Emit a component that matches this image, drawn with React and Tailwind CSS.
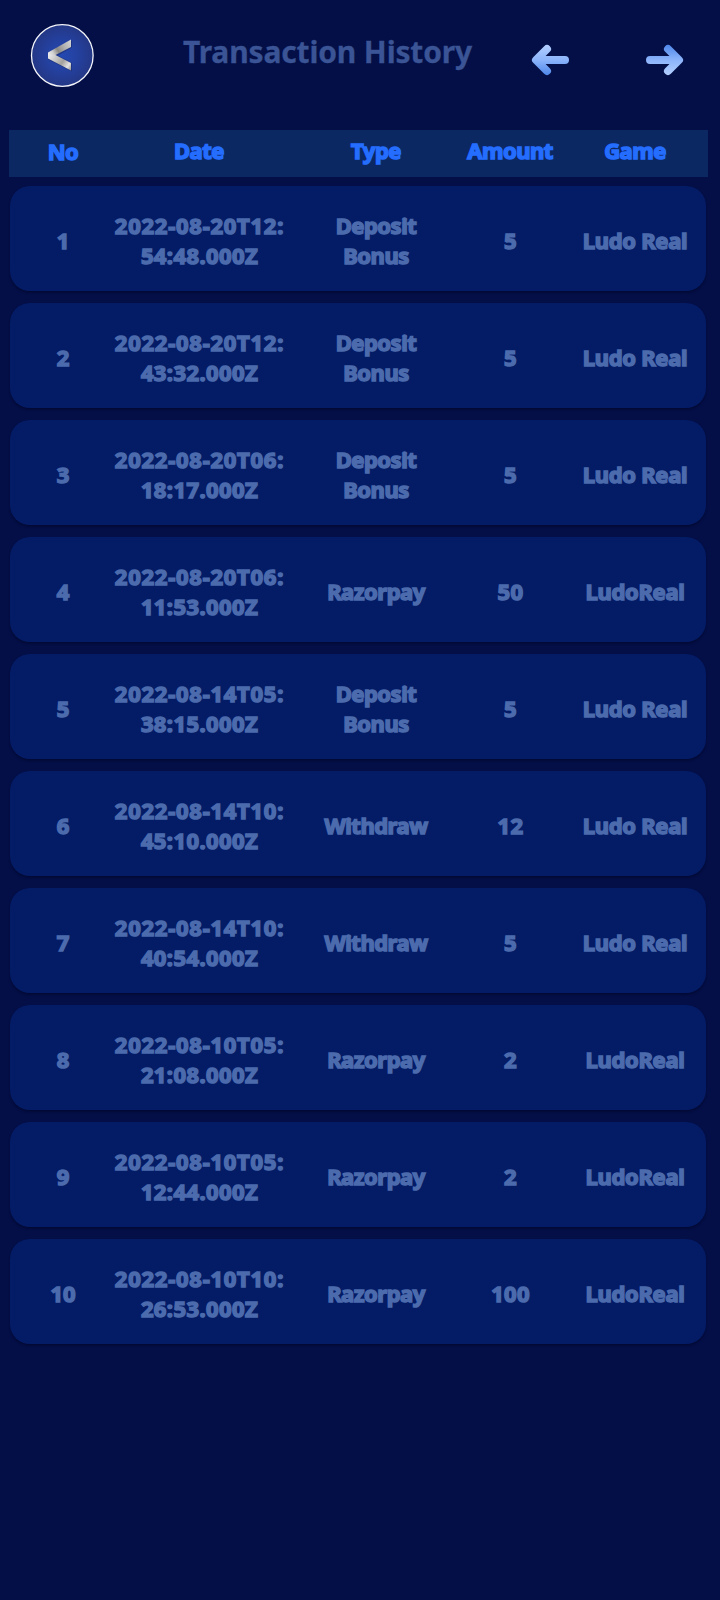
import React from 'react';

const transactions = [
  { date: ['2022-08-20T12:', '54:48.000Z'], type: ['Deposit', 'Bonus'], amount: 5, game: 'Ludo Real' },
  { date: ['2022-08-20T12:', '43:32.000Z'], type: ['Deposit', 'Bonus'], amount: 5, game: 'Ludo Real' },
  { date: ['2022-08-20T06:', '18:17.000Z'], type: ['Deposit', 'Bonus'], amount: 5, game: 'Ludo Real' },
  { date: ['2022-08-20T06:', '11:53.000Z'], type: ['Razorpay'], amount: 50, game: 'LudoReal' },
  { date: ['2022-08-14T05:', '38:15.000Z'], type: ['Deposit', 'Bonus'], amount: 5, game: 'Ludo Real' },
  { date: ['2022-08-14T10:', '45:10.000Z'], type: ['Withdraw'], amount: 12, game: 'Ludo Real' },
  { date: ['2022-08-14T10:', '40:54.000Z'], type: ['Withdraw'], amount: 5, game: 'Ludo Real' },
  { date: ['2022-08-10T05:', '21:08.000Z'], type: ['Razorpay'], amount: 2, game: 'LudoReal' },
  { date: ['2022-08-10T05:', '12:44.000Z'], type: ['Razorpay'], amount: 2, game: 'LudoReal' },
  { date: ['2022-08-10T10:', '26:53.000Z'], type: ['Razorpay'], amount: 100, game: 'LudoReal' },
];

const BackButton = () => (
  <button className="block h-16 w-16" aria-label="Back">
    <svg viewBox="0 0 64 64" className="h-16 w-16">
      <defs>
        <radialGradient id="disc">
          <stop offset="0" stopColor="#2448b0" />
          <stop offset="0.5" stopColor="#2441a0" />
          <stop offset="1" stopColor="#243785" />
        </radialGradient>
        <linearGradient id="upperArm" gradientUnits="userSpaceOnUse" x1="41" y1="18" x2="18" y2="32">
          <stop offset="0" stopColor="#d4d4d4" />
          <stop offset="0.3" stopColor="#b4b4b4" />
          <stop offset="0.6" stopColor="#8b8985" />
          <stop offset="0.8" stopColor="#d0d0d0" />
          <stop offset="1" stopColor="#f0f0f0" />
        </linearGradient>
        <linearGradient id="lowerArm" gradientUnits="userSpaceOnUse" x1="18" y1="31" x2="41" y2="46">
          <stop offset="0" stopColor="#f0f0f0" />
          <stop offset="0.35" stopColor="#c4c4c4" />
          <stop offset="0.6" stopColor="#a3a19e" />
          <stop offset="0.85" stopColor="#e2e2e2" />
          <stop offset="1" stopColor="#9b9b9b" />
        </linearGradient>
      </defs>
      <circle cx="32.3" cy="32.5" r="30.8" fill="url(#disc)" stroke="#f4f5fa" strokeWidth="1.3" />
      <path d="M42 17.5v7L28 32.500l14 7.500v8.500L18 36.500v-6z" fill="#16235f" opacity="0.45" />
      <path d="M41 16.500V24L25.500 32L18 32.500v-3z" fill="url(#upperArm)" />
      <path d="M18 32h7.500L41 40v7.500L18 35.500z" fill="url(#lowerArm)" />
    </svg>
  </button>
);

const Arrow = ({ id, d, from, to }) => (
  <svg viewBox="0 0 38 32" className="h-8 w-[38px]" fill="none" strokeWidth="8" strokeLinecap="round" strokeLinejoin="round">
    <defs>
      <linearGradient id={id} gradientUnits="userSpaceOnUse" x1="0" y1="0" x2="0" y2="32">
        <stop offset="0" stopColor={from} />
        <stop offset="0.5" stopColor="#8cb4fb" />
        <stop offset="1" stopColor={to} />
      </linearGradient>
    </defs>
    <path d={d} stroke={`url(#${id})`} />
  </svg>
);

const TableHeader = () => (
  <div className="ml-[9px] grid h-[47px] w-[699px] grid-cols-[70px_202px_152px_116px_134px] bg-[#0c2862] pl-[19px] pt-[5px] text-center text-[22px] leading-[30px] tracking-[-0.5px] text-[#246dff]">
    <span className="pt-px">No</span>
    <span>Date</span>
    <span>Type</span>
    <span>Amount</span>
    <span>Game</span>
  </div>
);

const TransactionRow = ({ no, item }) => (
  <div className="grid h-[105px] grid-cols-[70px_202px_152px_116px_134px] items-center rounded-[20px] bg-[#041c66] pl-[18px] pt-[3px] text-center text-[22px] leading-[30px] text-[#4c6bad] shadow-[0_2px_2px_rgba(2,6,40,0.5)]">
    <span>{no}</span>
    <div className="pl-px">
      {item.date.map((line, index) => (
        <div key={line} className={index === 0 ? 'tracking-[0.75px]' : 'tracking-[0.4px]'}>
          {line}
        </div>
      ))}
    </div>
    <div className="tracking-[-0.5px]">
      {item.type.map((line) => (
        <div key={line}>{line}</div>
      ))}
    </div>
    <span className="pl-px tracking-[0.3px]">{item.amount}</span>
    <span className="tracking-[-0.3px]">{item.game}</span>
  </div>
);

const App = () => (
  <div className="h-[1600px] w-[720px] overflow-hidden bg-[#040f47] font-['Noto_Sans',sans-serif] font-bold">
    <header className="flex h-[130px] items-start pl-[30px]">
      <div className="pt-[23px]">
        <BackButton />
      </div>
      <h1 className="ml-[89px] w-[288px] whitespace-nowrap pt-[32px] text-center text-[30px] leading-[40px] tracking-[-0.15px] text-[#3a5495] [-webkit-text-stroke:0.3px_currentColor]">
        Transaction History
      </h1>
      <button className="ml-[60px] pt-11" aria-label="Previous page">
        <Arrow id="prev" d="M16 5L5 16l11 11M6 16h28" from="#b5d0ff" to="#4b85ea" />
      </button>
      <button className="ml-[77px] pt-11" aria-label="Next page">
        <Arrow id="next" d="M22 5l11 11l-11 11M32 16H4" from="#4b85ea" to="#b5d0ff" />
      </button>
    </header>

    <main className="[-webkit-text-stroke:1.5px_currentColor] [stroke-linejoin:round]">
      <TableHeader />
      <div className="ml-2.5 mt-[9px] flex w-[696px] flex-col gap-3">
        {transactions.map((item, index) => (
          <TransactionRow key={index} no={index + 1} item={item} />
        ))}
      </div>
    </main>
  </div>
);

export default App;
